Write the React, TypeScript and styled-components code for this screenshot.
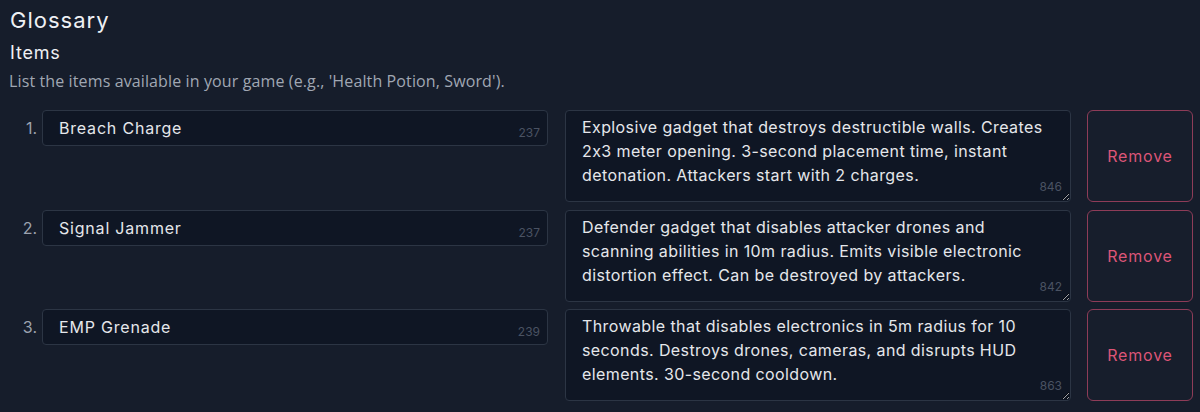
import { createGlobalStyle, styled } from "styled-components";

const GlobalStyle = createGlobalStyle`
  html, body {
    margin: 0;
    padding: 0;
    background: #161d2b;
  }
  body {
    font-family: Inter, "Noto Sans", sans-serif;
    color: #e5e7eb;
  }
`;

const Page = styled.div`
  width: 1200px;
  height: 412px;
  box-sizing: border-box;
  padding: 6px 7px 0 9px;
  overflow: hidden;
`;

const Title = styled.h1`
  margin: 0;
  padding-left: 1px;
  font-size: 22px;
  line-height: 28px;
  font-weight: 400;
  color: #eef0f4;
  letter-spacing: 1px;
`;

const Section = styled.h2`
  margin: 7px 0 0;
  padding-left: 1px;
  font-size: 18px;
  line-height: 24px;
  font-weight: 400;
  color: #eef0f4;
  letter-spacing: 0.8px;
`;

const Hint = styled.p`
  margin: 6px 0 0;
  font-family: "Open Sans", "Noto Sans", sans-serif;
  font-size: 16px;
  line-height: 20px;
  letter-spacing: 0.12px;
  color: #a0a7b3;
`;

const List = styled.div`
  margin-top: 19px;
  display: flex;
  flex-direction: column;
  gap: 7.5px;
`;

const Row = styled.div`
  display: flex;
  align-items: flex-start;
  height: 92px;
`;

const Index = styled.span`
  flex: 0 0 28px;
  margin-right: 5px;
  height: 36px;
  line-height: 36px;
  text-align: right;
  font-size: 16px;
  color: #9ca3af;
`;

const Field = styled.div<{ $tall?: boolean }>`
  position: relative;
  flex: 0 0 506px;
  height: ${p => (p.$tall ? "92px" : "36px")};
  margin-right: ${p => (p.$tall ? "16px" : "17px")};
`;

const NameInput = styled.input`
  width: 100%;
  height: 36px;
  box-sizing: border-box;
  margin: 0;
  padding: 0 44px 0 16px;
  background: #0f1624;
  border: 1px solid #2c3544;
  border-radius: 4px;
  color: #e5e7eb;
  font-family: Inter, "Noto Sans", sans-serif;
  font-size: 16px;
  letter-spacing: 0.8px;
  outline: none;
`;

const DescArea = styled.textarea`
  display: block;
  width: 100%;
  height: 92px;
  box-sizing: border-box;
  margin: 0;
  padding: 4px 16px;
  background: #0f1624;
  border: 1px solid #2c3544;
  border-radius: 4px;
  color: #e5e7eb;
  font-family: Inter, "Noto Sans", sans-serif;
  font-size: 16px;
  line-height: 24px;
  letter-spacing: 0.4px;
  resize: vertical;
  outline: none;
  overflow: hidden;
`;

const Counter = styled.span<{ $tall?: boolean }>`
  position: absolute;
  right: ${p => (p.$tall ? "9px" : "8px")};
  bottom: ${p => (p.$tall ? "9px" : "7px")};
  font-size: 12px;
  line-height: 1;
  color: #4a5262;
  pointer-events: none;
`;

const RemoveButton = styled.button`
  flex: 0 0 106px;
  height: 92px;
  box-sizing: border-box;
  background: #171e2c;
  border: 1px solid #8e3c58;
  border-radius: 6px;
  color: #dc5577;
  font-family: Inter, "Noto Sans", sans-serif;
  font-size: 16px;
  letter-spacing: 0.8px;
  cursor: pointer;
`;

const items = [
  {
    name: "Breach Charge",
    nameCount: 237,
    desc: "Explosive gadget that destroys destructible walls. Creates 2x3 meter opening. 3-second placement time, instant detonation. Attackers start with 2 charges.",
    descCount: 846,
  },
  {
    name: "Signal Jammer",
    nameCount: 237,
    desc: "Defender gadget that disables attacker drones and scanning abilities in 10m radius. Emits visible electronic distortion effect. Can be destroyed by attackers.",
    descCount: 842,
  },
  {
    name: "EMP Grenade",
    nameCount: 239,
    desc: "Throwable that disables electronics in 5m radius for 10 seconds. Destroys drones, cameras, and disrupts HUD elements. 30-second cooldown.",
    descCount: 863,
  },
];

export default function App() {
  return (
    <>
      <GlobalStyle />
      <Page>
        <Title>Glossary</Title>
        <Section>Items</Section>
        <Hint>List the items available in your game (e.g., 'Health Potion, Sword').</Hint>
        <List>
          {items.map((item, i) => (
            <Row key={item.name}>
              <Index>{i + 1}.</Index>
              <Field>
                <NameInput defaultValue={item.name} />
                <Counter>{item.nameCount}</Counter>
              </Field>
              <Field $tall>
                <DescArea defaultValue={item.desc} />
                <Counter $tall>{item.descCount}</Counter>
              </Field>
              <RemoveButton>Remove</RemoveButton>
            </Row>
          ))}
        </List>
      </Page>
    </>
  );
}
